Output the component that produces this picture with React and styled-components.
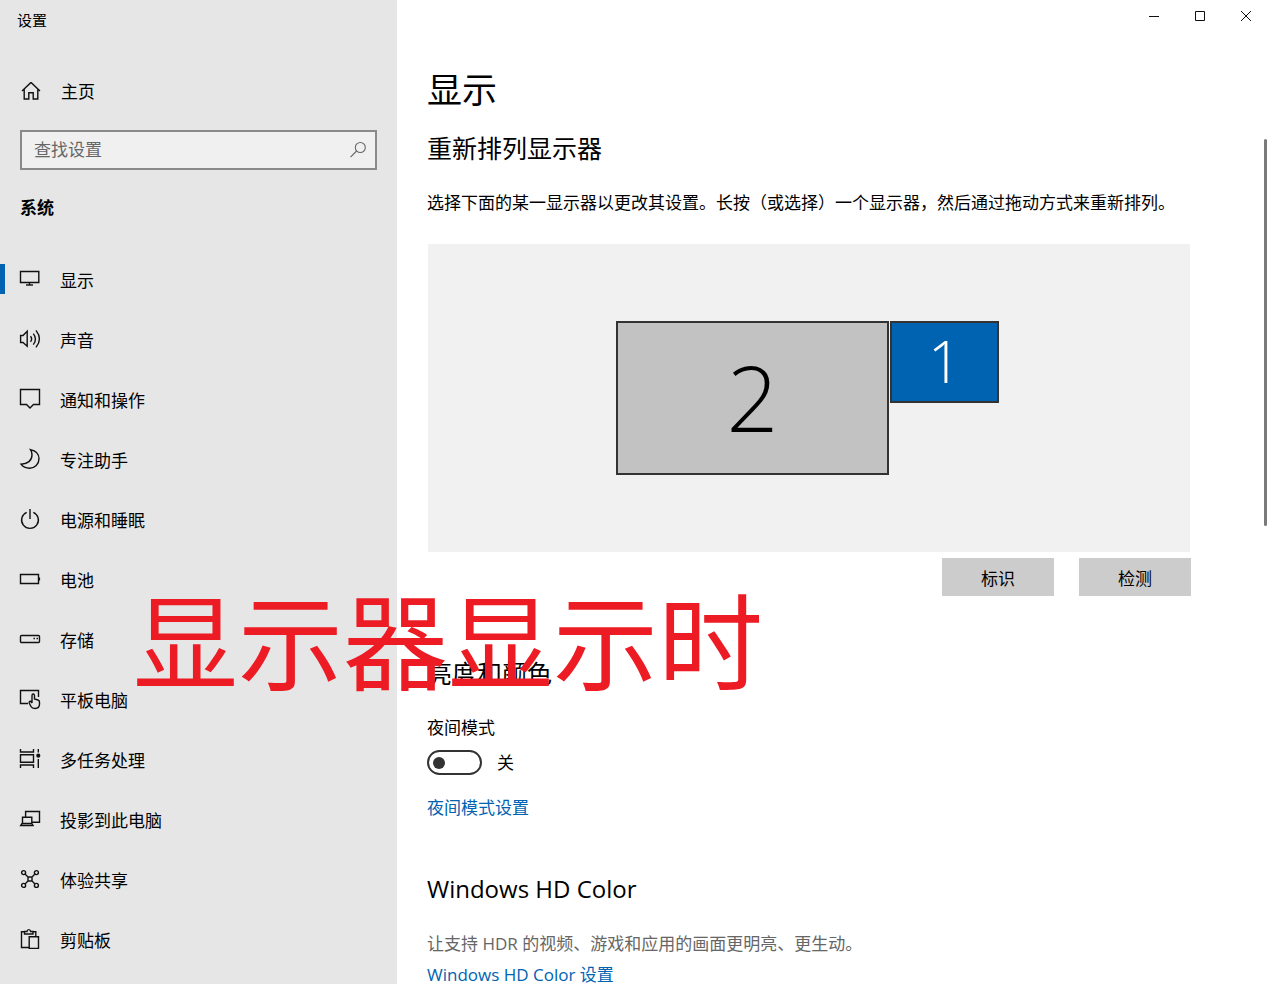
import React, { useState } from "react";
import styled, { createGlobalStyle } from "styled-components";

const GlobalStyle = createGlobalStyle`
* {
    box-sizing: border-box;
}
body {
    margin: 0;
    background-color: #fff;
    color: #000;
    font-family: "Open Sans", "Noto Sans CJK SC", sans-serif;
    font-size: 17px;
    line-height: 24px;
}
button, input {
    font: inherit;
    color: inherit;
}
`;

const Window = styled.div`
    position: relative;
    display: flex;
    height: 100vh;
    overflow: hidden;
`;

/* left side */

const Sidebar = styled.aside`
    flex: 0 0 397px;
    background-color: #e6e6e6;
`;

const AppName = styled.div`
    padding: 8px 17px;
    font-size: 15px;
`;

const HomeLink = styled.a`
    display: flex;
    align-items: center;
    gap: 20px;
    margin-top: 40px;
    padding-left: 21px;
    color: #000;
    text-decoration: none;
`;

const SearchBox = styled.label`
    display: flex;
    align-items: center;
    height: 40px;
    margin: 26px 20px 0;
    padding: 0 8px 0 12px;
    border: 2px solid #8a8a8a;
    background-color: #f0f0f0;
`;

const SearchInput = styled.input`
    flex: 1;
    min-width: 0;
    padding: 0;
    border: none;
    outline: none;
    background: transparent;
    &::placeholder {
        color: #666;
        opacity: 1;
    }
`;

const GroupTitle = styled.h2`
    margin: 26px 20px 31px;
    font-size: 17px;
    font-weight: 700;
`;

const NavList = styled.ul`
    margin: 0;
    padding: 0;
    list-style: none;
`;

const NavLink = styled.a`
    display: flex;
    align-items: center;
    height: 60px;
    color: #000;
    text-decoration: none;
    &::before {
        content: "";
        width: 5px;
        height: 30px;
        margin: 0 15px 4px 0;
        background-color: ${(props) => (props.$active ? "#0063b1" : "transparent")};
    }
`;

const NavIcon = styled.svg`
    width: 20px;
    height: 22px;
    margin-right: 20px;
    overflow: visible;
    fill: none;
    stroke: #111;
    stroke-width: 1.4;
`;

/* right side */

const Main = styled.main`
    flex: 1;
    min-width: 0;
    display: flex;
    flex-direction: column;
`;

const TitleBar = styled.div`
    display: flex;
    justify-content: flex-end;
`;

const CaptionButton = styled.button`
    display: flex;
    align-items: center;
    justify-content: center;
    width: 46px;
    height: 32px;
    padding: 0;
    border: none;
    background: transparent;
`;

const LineIcon = styled.svg`
    fill: none;
    stroke: ${(props) => props.$color || "#111"};
    stroke-width: ${(props) => props.$weight || 1};
`;

const PageTitle = styled.h1`
    margin: 34px 30px 18px;
    font-size: 35px;
    font-weight: 400;
    line-height: 48px;
`;

const ScrollArea = styled.div`
    flex: 1;
    min-height: 0;
    display: flex;
`;

const Content = styled.div`
    flex: 1;
    min-width: 0;
    padding: 0 73px 0 30px;
`;

const Rail = styled.div`
    width: 5px;
    padding: 7px 2px 0 0;
`;

const Thumb = styled.div`
    height: 387px;
    border-radius: 2px;
    background-color: #7a7a7a;
`;

const Section = styled.section`
    margin-bottom: ${(props) => props.$space || 0}px;
`;

const SectionTitle = styled.h2`
    margin: 0 0 27px;
    font-size: ${(props) => (props.$latin ? 24 : 25)}px;
    font-weight: 400;
    line-height: 32px;
`;

const Text = styled.p`
    margin: 0;
    color: ${(props) => (props.$muted ? "#666" : "#000")};
`;

const Arrangement = styled.div`
    position: relative;
    height: 308px;
    margin: 29px 1px 6px;
    background-color: #f1f1f1;
`;

const Monitor = styled.button`
    position: absolute;
    top: 77px;
    left: calc(50% + ${(props) => props.$x}px);
    width: ${(props) => props.$w}px;
    height: ${(props) => props.$h}px;
    padding: 0 0 2px;
    border: 2px solid #333;
    background-color: ${(props) => (props.$selected ? "#0063b1" : "#c2c2c2")};
    color: ${(props) => (props.$selected ? "#fff" : "#000")};
    font-size: ${(props) => props.$size}px;
    font-weight: 300;
    line-height: 1;
`;

const Actions = styled.div`
    display: flex;
    justify-content: flex-end;
    gap: 25px;
`;

const ActionButton = styled.button`
    width: 112px;
    height: 38px;
    padding: 3px 0 0;
    border: none;
    background-color: #ccc;
`;

const SwitchRow = styled.div`
    display: flex;
    align-items: center;
    gap: 15px;
    margin: 10px 0 20px;
`;

const Switch = styled.input`
    appearance: none;
    display: flex;
    align-items: center;
    width: 55px;
    height: 25px;
    margin: 0 0 1px;
    padding: 0 4px;
    border: 2px solid #333;
    border-radius: 13px;
    &::before {
        content: "";
        width: 12px;
        height: 12px;
        border-radius: 50%;
        background-color: #333;
    }
    &:checked {
        justify-content: flex-end;
        border-color: #0063b1;
        background-color: #0063b1;
    }
    &:checked::before {
        background-color: #fff;
    }
`;

const SettingLink = styled.a`
    display: block;
    color: #0063b1;
    text-decoration: none;
    ${Text} + & {
        margin-top: 7px;
    }
`;

const Caption = styled.div`
    position: absolute;
    left: 133px;
    top: 582px;
    color: #ed1c24;
    font-size: 105px;
    line-height: 120px;
    white-space: nowrap;
    pointer-events: none;
`;

const navItems = [
    {
        label: "显示",
        icon: <><path d="M.5 2.5H18.8V13.5H.5ZM9.5 13.5V16" /><path d="M6 16H13" /></>,
    },
    {
        label: "声音",
        icon: <path d="M.6 6.5H3L7.2 2.2V17.2L3 13.5H.6ZM10.5 7.2Q12.8 10 10.5 12.8M13.3 4.6Q17.6 10 13.3 15.6M16 1.4Q22.8 10 16 18.4" />,
    },
    {
        label: "通知和操作",
        icon: <path d="M.5.5H19.5V15.5H13.5L10 19L6.5 15.5H.5Z" />,
    },
    {
        label: "专注助手",
        icon: <path d="M10.5.6C15.5 1.6 19 5 19 9.8C19 15 14.8 19.3 9.5 19.3C6 19.3 3 18 1 15.2C7.5 15.2 12 11.5 12 6C12 4 11.5 2 10.5.6Z" />,
    },
    {
        label: "电源和睡眠",
        icon: <path d="M6.7 3.3A8.4 8.4 0 1 0 13.3 3.3M10 0V10" />,
    },
    {
        label: "电池",
        icon: <><path d="M.5 5.5H18.5V14.5H.5Z" /><path d="M19.4 8.5V11.5" /></>,
    },
    {
        label: "存储",
        icon: <><rect x=".5" y="6.5" width="19" height="7" rx="1" /><path d="M13.5 9.5H15M16.5 9.5H18" /></>,
    },
    {
        label: "平板电脑",
        icon: <path d="M8 14.5H.5V1.5H18.5V8M12 14V6.5Q12 5 13.2 5T14.5 6.5V10L18 11Q19.5 11.5 19.5 13V15Q19.5 19.5 15 19.5Q12 19.5 11 17.5L9.2 14Q9 12 10.5 12.2L12 14" />,
    },
    {
        label: "多任务处理",
        icon: <><path d="M.5 0V3H13.5V0M.5 5.8H13.5V13.2H.5ZM.5 19V16H13.5V19M18.3 0V3.5M18.3 10V19" /><circle cx="18.3" cy="6.7" r="1.4" fill="#111" /></>,
    },
    {
        label: "投影到此电脑",
        icon: <path d="M5.6 8V2.5H19.5V13.2H12.4M2.5 14.5V8.2H11.8V14.5M2 14.5H11.8L13 16.5H.7Z" />,
    },
    {
        label: "体验共享",
        icon: <>
            <circle cx="3.6" cy="3.6" r="2" /><circle cx="16.4" cy="3.6" r="2" />
            <circle cx="3.6" cy="16.4" r="2" /><circle cx="16.4" cy="16.4" r="2" />
            <path d="M8 8H12V12H8ZM5 5L8 8M15 5L12 8M5 15L8 12M15 15L12 12" />
        </>,
    },
    {
        label: "剪贴板",
        icon: <path d="M9 18.5H1.5V2.8H4.5M13 2.8H15.8V7.5M4.5 2.5H7Q7.2.6 8.8.6T10.6 2.5H13V5H4.5ZM9.2 7.8H18.5V19.4H9.2Z" />,
    },
];

const App = () => {
    const [active, setActive] = useState("显示");
    const [selected, setSelected] = useState(1);
    const [nightMode, setNightMode] = useState(false);
    const [query, setQuery] = useState("");

    return (
        <>
            <GlobalStyle />
            <Window>
                <Sidebar>
                    <AppName>设置</AppName>
                    <HomeLink href="#home">
                        <LineIcon width="20" height="20" viewBox="0 0 20 20" $weight={1.4}>
                            <path d="M1 9L10 .4L19 9M3.2 7.2V17H7.8V10.7H12.2V17H16.8V7.2" />
                        </LineIcon>
                        主页
                    </HomeLink>
                    <SearchBox>
                        <SearchInput
                            placeholder="查找设置"
                            aria-label="查找设置"
                            value={query}
                            onChange={(e) => setQuery(e.target.value)}
                        />
                        <LineIcon width="18" height="18" viewBox="0 0 18 18" $color="#666" $weight={1.1}>
                            <circle cx="11.3" cy="6.5" r="5" />
                            <path d="M7.6 10L1.5 16.2" />
                        </LineIcon>
                    </SearchBox>
                    <GroupTitle>系统</GroupTitle>
                    <NavList>
                        {navItems.map((item) => (
                            <li key={item.label}>
                                <NavLink
                                    href={"#" + item.label}
                                    $active={active === item.label}
                                    onClick={() => setActive(item.label)}
                                >
                                    <NavIcon viewBox="0 1 20 22">{item.icon}</NavIcon>
                                    {item.label}
                                </NavLink>
                            </li>
                        ))}
                    </NavList>
                </Sidebar>

                <Main>
                    <TitleBar>
                        <CaptionButton aria-label="最小化">
                            <LineIcon width="10" height="10"><path d="M0 5.5H10" /></LineIcon>
                        </CaptionButton>
                        <CaptionButton aria-label="最大化">
                            <LineIcon width="10" height="10"><path d="M.5.5H9.5V9.5H.5Z" /></LineIcon>
                        </CaptionButton>
                        <CaptionButton aria-label="关闭">
                            <LineIcon width="10" height="10"><path d="M0 0L10 10M10 0L0 10" /></LineIcon>
                        </CaptionButton>
                    </TitleBar>
                    <PageTitle>显示</PageTitle>
                    <ScrollArea>
                        <Content>
                            <Section $space={61}>
                                <SectionTitle>重新排列显示器</SectionTitle>
                                <Text>选择下面的某一显示器以更改其设置。长按（或选择）一个显示器，然后通过拖动方式来重新排列。</Text>
                                <Arrangement>
                                    <Monitor $x={-193} $w={273} $h={154} $size={91} $selected={selected === 2} onClick={() => setSelected(2)}>2</Monitor>
                                    <Monitor $x={81} $w={109} $h={82} $size={58} $selected={selected === 1} onClick={() => setSelected(1)}>1</Monitor>
                                </Arrangement>
                                <Actions>
                                    <ActionButton>标识</ActionButton>
                                    <ActionButton>检测</ActionButton>
                                </Actions>
                            </Section>
                            <Section $space={53}>
                                <SectionTitle>亮度和颜色</SectionTitle>
                                <Text as="label" htmlFor="night">夜间模式</Text>
                                <SwitchRow>
                                    <Switch
                                        id="night"
                                        type="checkbox"
                                        role="switch"
                                        checked={nightMode}
                                        onChange={(e) => setNightMode(e.target.checked)}
                                    />
                                    <span>{nightMode ? "开" : "关"}</span>
                                </SwitchRow>
                                <SettingLink href="#night">夜间模式设置</SettingLink>
                            </Section>
                            <Section>
                                <SectionTitle $latin>Windows HD Color</SectionTitle>
                                <Text $muted>让支持 HDR 的视频、游戏和应用的画面更明亮、更生动。</Text>
                                <SettingLink href="#hdcolor">Windows HD Color 设置</SettingLink>
                            </Section>
                        </Content>
                        <Rail><Thumb /></Rail>
                    </ScrollArea>
                </Main>
                <Caption>显示器显示时</Caption>
            </Window>
        </>
    )
}
export default App
